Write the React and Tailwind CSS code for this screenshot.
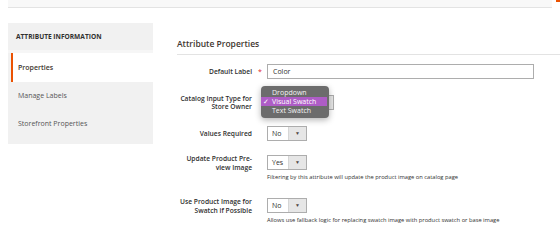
import React from 'react';

function SelectBox({ value, width = 'w-[40px]' }) {
  return (
    <div className={`${width} h-[15px] flex border border-[#adadad] bg-white`}>
      <div className="flex-1 flex items-center pl-[4px] text-[7px] leading-[8px] text-[#303030]">{value}</div>
      <div className="w-[18px] flex items-center justify-center bg-[#e6e6e6] border-l border-[#d6d6d6]">
        <span className="text-[5px] leading-none text-[#514943]">▼</span>
      </div>
    </div>
  );
}

function Row({ label, required, children, hint, className = '', labelLeading = 'leading-[9px]' }) {
  return (
    <div className={`flex items-start ${className}`}>
      <div className="w-[75px] h-[15px] flex items-center justify-end">
        <div className={`text-right whitespace-nowrap text-[6.7px] ${labelLeading} font-semibold text-[#303030]`}>{label}</div>
      </div>
      <div className="w-[15px] h-[15px] flex items-center justify-center">
        {required && <span className="text-[7px] leading-none text-[#e22626] pl-[1px]">*</span>}
      </div>
      <div className="flex flex-col">
        {children}
        {hint && <div className="mt-[4px] whitespace-nowrap text-[5.75px] leading-[7px] text-[#303030]">{hint}</div>}
      </div>
    </div>
  );
}

export default function App() {
  return (
    <div className="w-[560px] h-[243px] bg-white overflow-hidden relative" style={{ fontFamily: '"Open Sans", "Liberation Sans", sans-serif' }}>
      {/* Top strip */}
      <div className="mx-[8px] h-[8px] bg-[#f8f8f8] border-b border-[#e3e3e3]" />
      <div className="absolute right-0 top-0 w-[4px] h-[2px] bg-[#eb5202]" />

      <div className="flex pt-[15px]">
        {/* Sidebar */}
        <div className="ml-[8px] w-[145px] h-[121px] bg-[#f1f1f1]">
          <div className="h-[27px] flex items-center pl-[8px] text-[6.6px] leading-[8px] font-bold text-[#303030]">
            ATTRIBUTE INFORMATION
          </div>
          <div className="h-[3px] bg-[#f6f6f6]" />
          <div className="ml-[3px] h-[29px] flex items-center pl-[5px] bg-white border-l-2 border-[#eb5202] text-[7px] leading-[8px] font-semibold text-[#41362f]">
            Properties
          </div>
          <div className="h-[28px] flex items-center pl-[10px] text-[7px] leading-[8px] text-[#555]">Manage Labels</div>
          <div className="h-[27px] flex items-center pl-[10px] text-[7px] leading-[8px] text-[#555]">Storefront Properties</div>
        </div>

        {/* Main */}
        <div className="flex-1 pl-[24px]">
          <div className="pt-[15px] pb-[4px] border-b border-[#e3e3e3] text-[8.5px] leading-[12px] font-semibold text-[#41362f]">
            Attribute Properties
          </div>

          <Row label="Default Label" required className="mt-[9px]">
            <div className="w-[267px] h-[15px] border border-[#adadad] bg-white flex items-center pl-[5px] text-[7px] leading-[8px] text-[#303030]">
              Color
            </div>
          </Row>

          <Row label={<>Catalog Input Type for<br />Store Owner</>} className="mt-[16px]" labelLeading="leading-[8px]">
            <div className="relative">
              <SelectBox value="" width="w-[67px]" />
              <div className="absolute left-[-6px] top-[-9px] w-[68px] h-[32px] rounded-[4px] bg-[#6c6c6c] shadow-[0_2px_6px_rgba(0,0,0,0.3)] pt-[2px] flex flex-col">
                <div className="h-[9px] flex items-center pl-[11px] text-[7px] leading-[8px] text-[#f2f2f2]">Dropdown</div>
                <div className="h-[9px] mr-[2px] flex items-center bg-[#ae5dc6] text-[7px] leading-[8px] text-white">
                  <span className="w-[11px] pl-[2px] text-[7px]">✓</span>
                  <span>Visual Swatch</span>
                </div>
                <div className="h-[9px] flex items-center pl-[11px] text-[7px] leading-[8px] text-[#f2f2f2]">Text Swatch</div>
              </div>
            </div>
          </Row>

          <Row label="Values Required" className="mt-[16px]">
            <SelectBox value="No" />
          </Row>

          <Row
            label={<>Update Product Pre-<br />view Image</>}
            className="mt-[14px]"
            hint="Filtering by this attribute will update the product image on catalog page"
          >
            <SelectBox value="Yes" />
          </Row>

          <Row
            label={<>Use Product Image for<br />Swatch if Possible</>}
            className="mt-[17px]"
            hint="Allows use fallback logic for replacing swatch image with product swatch or base image"
          >
            <SelectBox value="No" />
          </Row>
        </div>
      </div>
    </div>
  );
}
